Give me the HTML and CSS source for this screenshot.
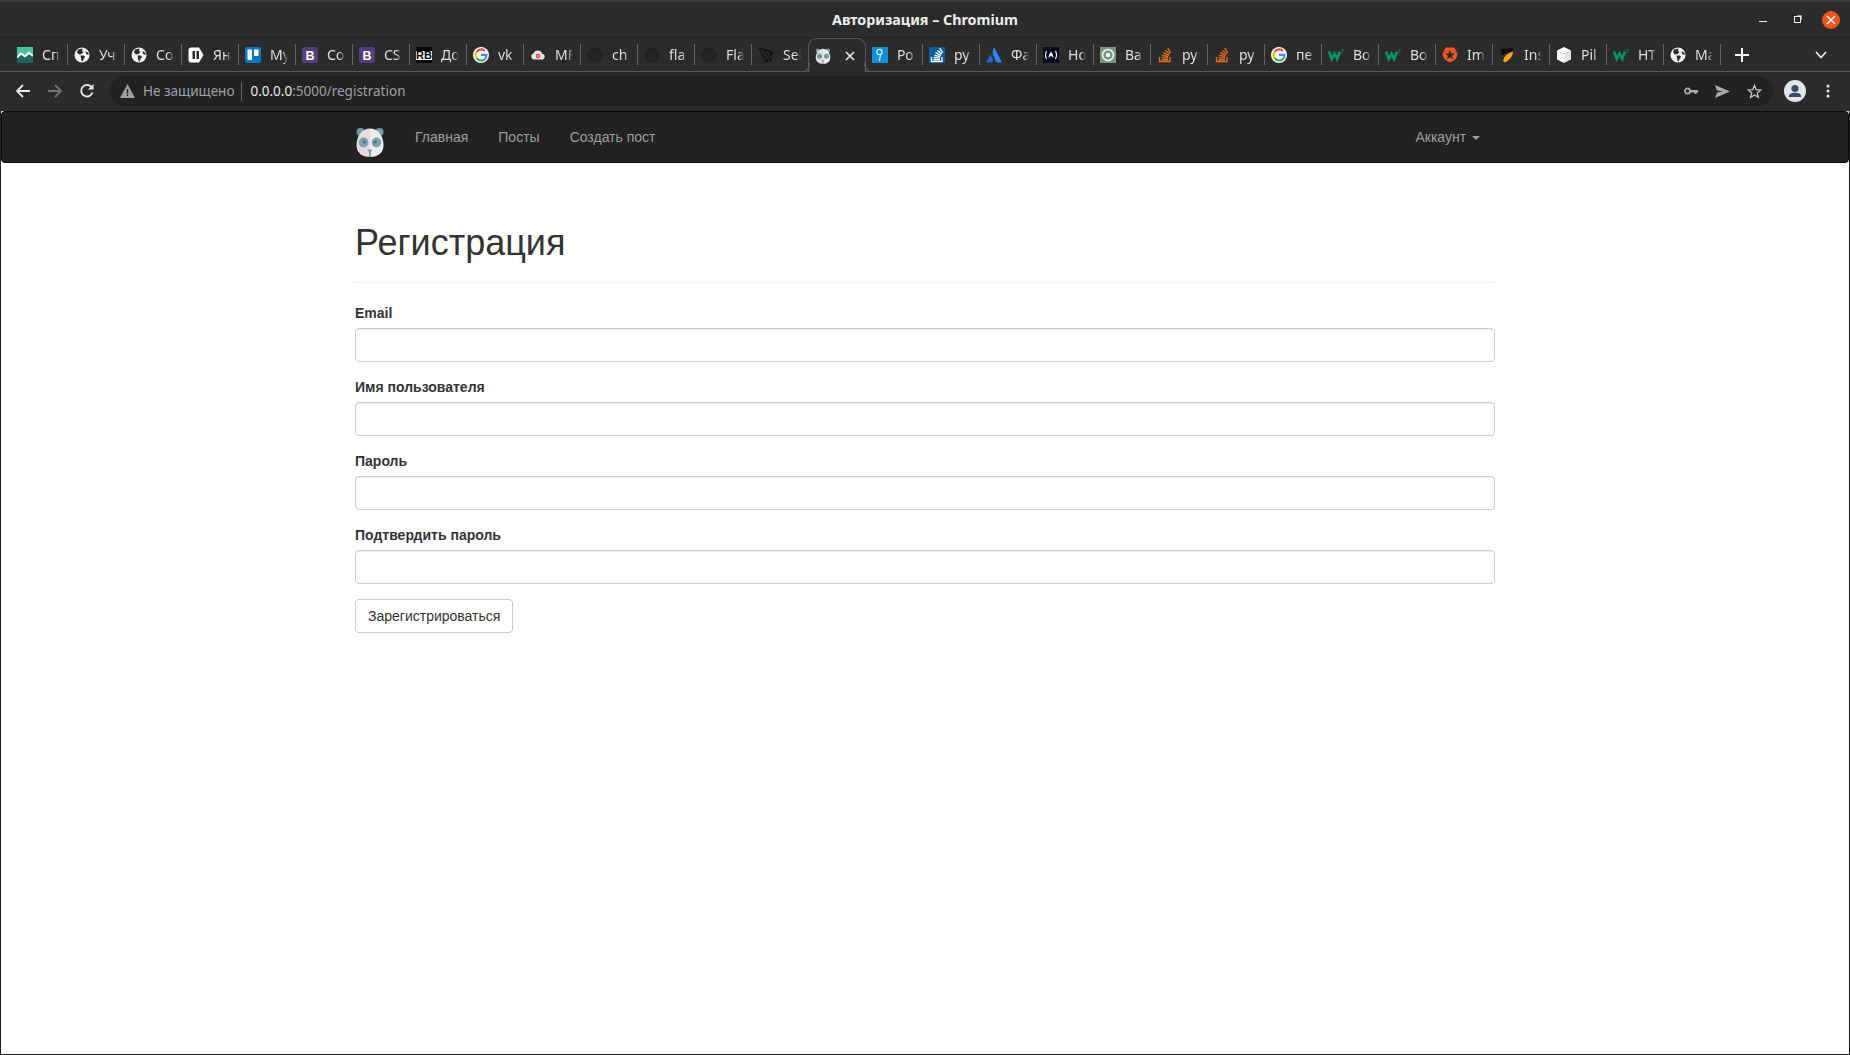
FILE: index.html
```html
<!DOCTYPE html>
<html lang="ru">

<head>
    <meta charset="UTF-8">
    <meta name="viewport" content="width=device-width, initial-scale=1.0">
    <title>Авторизация</title>
    <link rel="stylesheet" href="styles.css">
</head>

<body>
    <!-- иконки вкладок -->
    <svg class="sprite" aria-hidden="true">
        <symbol id="i-chart" viewBox="0 0 16 16">
            <rect width="16" height="8" fill="#45c4a4"/>
            <rect y="8" width="16" height="8" fill="#1b6657"/>
            <path d="M0 10.500 L4 6.500 L8 9.500 L12 5.500 L16 9" fill="none" stroke="#fff" stroke-width="2"/>
        </symbol>
        <symbol id="i-globe" viewBox="0 0 16 16">
            <circle cx="8" cy="8" r="7.500" fill="#f4f4f4"/>
            <path d="M4 2.500 L8.500 1.500 L8 4 L9.500 5 L7.500 7 L5 7.500 L3 5.500 Z" fill="#2b2b2b"/>
            <path d="M6.500 8.500 L10 8.500 L11 10 L9.500 12 L8.500 14.500 L7.500 14 L7 11 Z" fill="#2b2b2b"/>
            <path d="M11.500 4 L14.500 6 L14.500 8 L12 7 Z" fill="#2b2b2b"/>
        </symbol>
        <symbol id="i-pause" viewBox="0 0 16 16">
            <path d="M3 .5 H11 L15.500 8 L11 15.500 H3 Q.5 15.500 .5 13 V3 Q.5 .5 3 .5 Z" fill="#fff"/>
            <rect x="4.500" y="4" width="2.500" height="8" fill="#2b2b2b"/>
            <rect x="8.500" y="4" width="2.500" height="8" fill="#2b2b2b"/>
        </symbol>
        <symbol id="i-trello" viewBox="0 0 16 16">
            <rect width="16" height="16" rx="2" fill="#0b79bf"/>
            <rect x="2.500" y="2.500" width="4.500" height="10.500" rx=".7" fill="#fff"/>
            <rect x="9" y="2.500" width="4.500" height="6.500" rx=".7" fill="#fff"/>
        </symbol>
        <symbol id="i-bootstrap" viewBox="0 0 16 16">
            <rect width="16" height="16" rx="2.500" fill="#563d7c"/>
            <text x="8" y="12.500" text-anchor="middle" class="icon-text" font-size="12.500" fill="#fff">B</text>
        </symbol>
        <symbol id="i-rb" viewBox="0 0 16 16">
            <rect width="16" height="16" fill="#fff"/>
            <rect width="16" height="4" fill="#000"/>
            <rect y="13" width="16" height="3" fill="#000"/>
            <text x="8" y="12" text-anchor="middle" class="icon-text" font-size="11" fill="#000">RB</text>
        </symbol>
        <symbol id="i-google" viewBox="0 0 16 16">
            <circle cx="8" cy="8" r="8" fill="#fff"/>
            <path d="M12 4.100 A5.400 5.400 0 0 0 3.700 4.800" fill="none" stroke="#ea4335" stroke-width="2.200"/>
            <path d="M3.700 4.800 A5.400 5.400 0 0 0 3.700 11.200" fill="none" stroke="#fbbc05" stroke-width="2.200"/>
            <path d="M3.700 11.200 A5.400 5.400 0 0 0 12 11.900" fill="none" stroke="#34a853" stroke-width="2.200"/>
            <path d="M12 11.900 A5.400 5.400 0 0 0 13.400 7.800 H8" fill="none" stroke="#4285f4" stroke-width="2.200"/>
        </symbol>
        <symbol id="i-cloud" viewBox="0 0 16 16">
            <path d="M4 12.500 A3 3 0 0 1 3.500 6.600 A4.600 4.600 0 0 1 12.300 6.800 A2.900 2.900 0 0 1 12.500 12.500 Z" fill="#e6e6e6"/>
            <circle cx="8" cy="9" r="2.200" fill="#d23c3c"/>
            <rect x="7" y="8.500" width="2" height="1" fill="#fff"/>
        </symbol>
        <symbol id="i-github" viewBox="0 0 16 16">
            <circle cx="8" cy="8" r="7.500" fill="#1c2329"/>
            <path d="M5 14 V11 Q3.500 9.500 3.700 7.500 L4 4 L6 5 H10 L12 4 L12.300 7.500 Q12.500 9.500 11 11 V14 Z" fill="#252525"/>
        </symbol>
        <symbol id="i-harp" viewBox="0 0 16 16">
            <path d="M0 0 L3 1 L14 4 L15 6 L13 14 L8 15.500 L5 10 Z" fill="#121212"/>
            <path d="M3 2 L9 13 M6 3.500 L11 13 M9 4 L13 11" stroke="#3d3d3d" stroke-width=".8" fill="none"/>
        </symbol>
        <symbol id="i-panda" viewBox="0 0 30 30">
            <circle cx="5.500" cy="5" r="4" fill="#6f9bab"/>
            <circle cx="24.500" cy="5" r="4" fill="#6f9bab"/>
            <path d="M15 1.500 C7 1.500 1.500 9 1.500 18 C1.500 26 7 30 15 30 Z" fill="#e9dcdc"/>
            <path d="M15 1.500 C23 1.500 28.500 9 28.500 18 C28.500 26 23 30 15 30 Z" fill="#f3ecec"/>
            <ellipse cx="8.500" cy="15.500" rx="4.800" ry="5" fill="#7aa3b2"/>
            <ellipse cx="21.500" cy="15.500" rx="4.800" ry="5" fill="#7aa3b2"/>
            <circle cx="9.500" cy="15" r="1.600" fill="#4d7382"/>
            <circle cx="20.500" cy="15" r="1.600" fill="#4d7382"/>
            <path d="M12.500 22.500 H17.500 L16 25 V30 H14 V25 Z" fill="#7aa3b2"/>
        </symbol>
        <symbol id="i-hook" viewBox="0 0 16 16">
            <rect width="16" height="16" fill="#0d8fd8"/>
            <circle cx="7.500" cy="5" r="2.600" fill="none" stroke="#d8f3ff" stroke-width="1.200"/>
            <path d="M8.500 7.500 L7.500 14" stroke="#d8f3ff" stroke-width="1.200"/>
        </symbol>
        <symbol id="i-stack" viewBox="0 0 16 16">
            <path d="M2.500 10 V14.500 H13 V10" fill="none" stroke="currentColor" stroke-width="1.300"/>
            <path d="M4.500 12.800 H11 M4.700 10.500 L11 11.100 M5.300 8.200 L11.300 9.600 M6.500 5.700 L12 8.300 M8.300 3.500 L12.800 7 M10.700 1.200 L13.700 5.800" fill="none" stroke="currentColor" stroke-width="1.400"/>
        </symbol>
        <symbol id="i-atlassian" viewBox="0 0 16 16">
            <path d="M8.200 .5 C6 4 6.300 7 8 10 L10.500 15.500 H16 Z" fill="#2684ff"/>
            <path d="M4.500 7.500 L0 15.500 H6.500 L7 12 Z" fill="#2065d1"/>
        </symbol>
        <symbol id="i-fcc" viewBox="0 0 16 16">
            <rect width="16" height="16" fill="#0a0a23"/>
            <path d="M3.500 4 Q1.500 8 3.500 12 M12.500 4 Q14.500 8 12.500 12" fill="none" stroke="#fff" stroke-width="1.100"/>
            <path d="M5.500 11 Q5.500 8 8 4.500 Q10.500 8 10.500 11 L8 8.500 Z" fill="#fff"/>
        </symbol>
        <symbol id="i-target" viewBox="0 0 16 16">
            <rect width="16" height="16" fill="#77957c"/>
            <circle cx="8" cy="8" r="5.500" fill="none" stroke="#f0f0f0" stroke-width="1.600"/>
            <circle cx="8" cy="8" r="2.200" fill="#f0f0f0"/>
        </symbol>
        <symbol id="i-w3" viewBox="0 0 16 16">
            <path d="M1 4.500 L3.800 12 L6.500 6.500 L9.200 12 L12 4.500" fill="none" stroke="#04995f" stroke-width="2.500"/>
            <path d="M13.500 2.500 H15.500 L14.500 4 Q15.800 5 13.500 5.800" fill="none" stroke="#04995f" stroke-width=".7"/>
        </symbol>
        <symbol id="i-auth0" viewBox="0 0 16 16">
            <path d="M3.500 .5 H12.500 L15.500 7 C15.500 11 12 14 8 15.500 C4 14 .5 11 .5 7 Z" fill="#eb5424"/>
            <path d="M8 3 L9.300 6.500 H13 L10 8.700 L11 12.300 L8 10.200 L5 12.300 L6 8.700 L3 6.500 H6.700 Z" fill="#2b2b2b"/>
        </symbol>
        <symbol id="i-ins" viewBox="0 0 16 16">
            <path d="M2 2.500 Q8 .5 14.500 1 L14 4 Q8 4.500 3 8 Z" fill="#0d0d0d"/>
            <path d="M14 4.500 C14 9 11 13 6 15.500 L4 14 L5.500 10 Q8 6 14 4.500 Z" fill="#eaa624"/>
        </symbol>
        <symbol id="i-cube" viewBox="0 0 16 16">
            <path d="M8 0 L15 3.500 L8 7 L1 3.500 Z" fill="#fff"/>
            <path d="M1 3.500 L8 7 V16 L1 12.500 Z" fill="#f4f4f4"/>
            <path d="M15 3.500 L8 7 V16 L15 12.500 Z" fill="#e2e2e2"/>
        </symbol>
    </svg>

    <div class="titlebar">
        <div></div>
        <div class="window-title">Авторизация – Chromium</div>
        <div class="window-controls">
            <span class="win-min"></span>
            <span class="win-restore"></span>
            <span class="win-close">
                <svg width="10" height="10" viewBox="0 0 10 10"><path d="M1 1 L9 9 M9 1 L1 9" stroke="#fff" stroke-width="1.300"/></svg>
            </span>
        </div>
    </div>

    <div class="tabstrip">
        <div class="tab"><svg class="favicon"><use href="#i-chart"/></svg><span class="tab-label">Сп</span><i class="tab-sep"></i></div>
        <div class="tab"><svg class="favicon"><use href="#i-globe"/></svg><span class="tab-label">Уч</span><i class="tab-sep"></i></div>
        <div class="tab"><svg class="favicon"><use href="#i-globe"/></svg><span class="tab-label">Со</span><i class="tab-sep"></i></div>
        <div class="tab"><svg class="favicon"><use href="#i-pause"/></svg><span class="tab-label">Ян</span><i class="tab-sep"></i></div>
        <div class="tab"><svg class="favicon"><use href="#i-trello"/></svg><span class="tab-label">My</span><i class="tab-sep"></i></div>
        <div class="tab"><svg class="favicon"><use href="#i-bootstrap"/></svg><span class="tab-label">Со</span><i class="tab-sep"></i></div>
        <div class="tab"><svg class="favicon"><use href="#i-bootstrap"/></svg><span class="tab-label">CS</span><i class="tab-sep"></i></div>
        <div class="tab"><svg class="favicon"><use href="#i-rb"/></svg><span class="tab-label">До</span><i class="tab-sep"></i></div>
        <div class="tab"><svg class="favicon"><use href="#i-google"/></svg><span class="tab-label">vk</span><i class="tab-sep"></i></div>
        <div class="tab"><svg class="favicon"><use href="#i-cloud"/></svg><span class="tab-label">MF</span><i class="tab-sep"></i></div>
        <div class="tab"><svg class="favicon"><use href="#i-github"/></svg><span class="tab-label">ch</span><i class="tab-sep"></i></div>
        <div class="tab"><svg class="favicon"><use href="#i-github"/></svg><span class="tab-label">fla</span><i class="tab-sep"></i></div>
        <div class="tab"><svg class="favicon"><use href="#i-github"/></svg><span class="tab-label">Fla</span><i class="tab-sep"></i></div>
        <div class="tab tab-before-active"><svg class="favicon"><use href="#i-harp"/></svg><span class="tab-label">Sel</span><i class="tab-sep"></i></div>
        <div class="tab tab-active"><svg class="favicon"><use href="#i-panda"/></svg>
            <svg class="tab-close" width="10" height="10" viewBox="0 0 10 10"><path d="M1 1 L9 9 M9 1 L1 9" stroke="#e8eaed" stroke-width="1.700"/></svg>
        </div>
        <div class="tab"><svg class="favicon"><use href="#i-hook"/></svg><span class="tab-label">Ро</span><i class="tab-sep"></i></div>
        <div class="tab"><svg class="favicon icon-so-blue"><use href="#i-stack"/></svg><span class="tab-label">py</span><i class="tab-sep"></i></div>
        <div class="tab"><svg class="favicon"><use href="#i-atlassian"/></svg><span class="tab-label">Фа</span><i class="tab-sep"></i></div>
        <div class="tab"><svg class="favicon"><use href="#i-fcc"/></svg><span class="tab-label">Но</span><i class="tab-sep"></i></div>
        <div class="tab"><svg class="favicon"><use href="#i-target"/></svg><span class="tab-label">Ва</span><i class="tab-sep"></i></div>
        <div class="tab"><svg class="favicon icon-so-orange"><use href="#i-stack"/></svg><span class="tab-label">py</span><i class="tab-sep"></i></div>
        <div class="tab"><svg class="favicon icon-so-orange"><use href="#i-stack"/></svg><span class="tab-label">py</span><i class="tab-sep"></i></div>
        <div class="tab"><svg class="favicon"><use href="#i-google"/></svg><span class="tab-label">пе</span><i class="tab-sep"></i></div>
        <div class="tab"><svg class="favicon"><use href="#i-w3"/></svg><span class="tab-label">Во</span><i class="tab-sep"></i></div>
        <div class="tab"><svg class="favicon"><use href="#i-w3"/></svg><span class="tab-label">Во</span><i class="tab-sep"></i></div>
        <div class="tab"><svg class="favicon"><use href="#i-auth0"/></svg><span class="tab-label">Im</span><i class="tab-sep"></i></div>
        <div class="tab"><svg class="favicon"><use href="#i-ins"/></svg><span class="tab-label">Ins</span><i class="tab-sep"></i></div>
        <div class="tab"><svg class="favicon"><use href="#i-cube"/></svg><span class="tab-label">Pil</span><i class="tab-sep"></i></div>
        <div class="tab"><svg class="favicon"><use href="#i-w3"/></svg><span class="tab-label">HT</span><i class="tab-sep"></i></div>
        <div class="tab"><svg class="favicon"><use href="#i-globe"/></svg><span class="tab-label">Ма</span><i class="tab-sep"></i></div>
        <svg class="new-tab" width="14" height="14" viewBox="0 0 14 14"><path d="M7 0 V14 M0 7 H14" stroke="#fff" stroke-width="2"/></svg>
        <svg class="tab-search" width="12" height="8" viewBox="0 0 12 8"><path d="M1 1 L6 6.500 L11 1" fill="none" stroke="#e8eaed" stroke-width="1.600"/></svg>
    </div>

    <div class="toolbar">
        <svg class="nav-btn" width="16" height="16" viewBox="0 0 16 16"><path d="M15 8 H2 M8 2 L2 8 L8 14" fill="none" stroke="#e8eaed" stroke-width="1.800"/></svg>
        <svg class="nav-btn" width="16" height="16" viewBox="0 0 16 16"><path d="M1 8 H14 M8 2 L14 8 L8 14" fill="none" stroke="#737373" stroke-width="1.800"/></svg>
        <svg class="nav-btn" width="16" height="16" viewBox="0 0 16 16"><path d="M13.500 9.500 A5.800 5.800 0 1 1 12.200 3.700" fill="none" stroke="#e8eaed" stroke-width="1.800"/><path d="M14.500 1 V6.500 H9 Z" fill="#e8eaed"/></svg>

        <div class="omnibox">
            <svg class="warn-icon" width="15" height="14" viewBox="0 0 15 14"><path d="M7.500 0 L15 14 H0 Z" fill="#9aa0a6"/><rect x="6.800" y="5" width="1.400" height="4.500" fill="#222"/><rect x="6.800" y="10.500" width="1.400" height="1.500" fill="#222"/></svg>
            <span class="not-secure">Не защищено</span>
            <span class="omni-sep"></span>
            <span class="url"><b>0.0.0.0</b>:5000/registration</span>
            <div class="omni-actions">
                <svg width="14" height="8" viewBox="0 0 14 8"><circle cx="3.500" cy="4" r="2.600" fill="none" stroke="#aaa" stroke-width="1.800"/><path d="M6 3 H14 V5.500 H12.500 V7 H10.500 V5.500 H6 Z" fill="#aaa"/></svg>
                <svg width="15" height="13" viewBox="0 0 15 13"><path d="M0 0 L15 6.500 L0 13 L2 7.500 L8 6.500 L2 5.500 Z" fill="#aaa"/></svg>
                <svg width="15" height="15" viewBox="0 0 15 15"><path d="M7.500 1.500 L9.200 5.700 L13.800 6 L10.200 8.900 L11.400 13.300 L7.500 10.900 L3.600 13.300 L4.800 8.900 L1.200 6 L5.800 5.700 Z" fill="none" stroke="#c4c7ca" stroke-width="1.300"/></svg>
            </div>
        </div>

        <svg class="avatar" width="22" height="22" viewBox="0 0 22 22"><circle cx="11" cy="11" r="11" fill="#e3e6ea"/><circle cx="11" cy="8.500" r="3.600" fill="#3f4d63"/><path d="M4.500 17 Q5 12.800 11 12.800 Q17 12.800 17.500 17 Z" fill="#3f4d63"/></svg>
        <svg class="menu-dots" width="4" height="14" viewBox="0 0 4 14"><circle cx="2" cy="2" r="1.500" fill="#e8eaed"/><circle cx="2" cy="7" r="1.500" fill="#e8eaed"/><circle cx="2" cy="12" r="1.500" fill="#e8eaed"/></svg>
    </div>

    <div class="page">
        <nav class="navbar">
            <div class="nav-container">
                <a class="navbar-brand" href="#"><svg width="30" height="30"><use href="#i-panda"/></svg></a>
                <ul class="nav-list">
                    <li><a href="#">Главная</a></li>
                    <li><a href="#">Посты</a></li>
                    <li><a href="#">Создать пост</a></li>
                </ul>
                <ul class="nav-list nav-right">
                    <li><a href="#">Аккаунт <span class="caret"></span></a></li>
                </ul>
            </div>
        </nav>

        <main class="container">
            <div class="page-header">
                <h1>Регистрация</h1>
            </div>
            <form>
                <div class="form-group">
                    <label for="email">Email</label>
                    <input type="text" id="email">
                </div>
                <div class="form-group">
                    <label for="username">Имя пользователя</label>
                    <input type="text" id="username">
                </div>
                <div class="form-group">
                    <label for="password">Пароль</label>
                    <input type="password" id="password">
                </div>
                <div class="form-group">
                    <label for="confirm">Подтвердить пароль</label>
                    <input type="password" id="confirm">
                </div>
                <button type="button" class="btn">Зарегистрироваться</button>
            </form>
        </main>
    </div>
</body>

</html>
```

FILE: styles.css
```css
* {
    box-sizing: border-box;
}

body {
    margin: 0;
    height: 100vh;
    overflow: hidden;
    display: flex;
    flex-direction: column;
    background-color: #fff;
    color: #333;
    font-family: "Liberation Sans", Arial, sans-serif;
    font-size: 14px;
    line-height: 20px;
}

.sprite {
    display: none;
}

.icon-text {
    font-family: "Liberation Sans", Arial, sans-serif;
    font-weight: bold;
}

/* окно браузера */
.titlebar {
    height: 38px;
    flex-shrink: 0;
    display: grid;
    grid-template-columns: 1fr auto 1fr;
    align-items: center;
    background-color: #2b2b2b;
    border-top: 2px solid #3b3b3b;
    border-bottom: 1px solid #212121;
}

.window-title {
    color: #eeeeee;
    font-family: "Noto Sans", sans-serif;
    font-size: 14.300px;
    font-weight: bold;
}

.window-controls {
    display: flex;
    justify-content: flex-end;
    align-items: center;
    padding-right: 10px;
}

.win-min {
    width: 8px;
    height: 1px;
    margin-top: 4px;
    background-color: #f0f0f0;
}

.win-restore {
    width: 7px;
    height: 7px;
    margin-left: 27px;
    margin-bottom: 1px;
    border: 1px solid #f0f0f0;
    box-shadow: 2px -2px 0 -1px #999;
}

.win-close {
    width: 18px;
    height: 18px;
    margin-left: 21px;
    display: flex;
    align-items: center;
    justify-content: center;
    border-radius: 50%;
    background-color: #e95420;
}

.tabstrip {
    height: 34px;
    flex-shrink: 0;
    display: flex;
    padding-left: 11px;
    background-color: #2b2b2b;
    border-bottom: 1px solid #5a5a5a;
}

.tab {
    width: 57px;
    height: 33px;
    flex-shrink: 0;
    display: flex;
    align-items: center;
    padding-left: 6px;
}

.favicon {
    width: 16px;
    height: 16px;
    flex-shrink: 0;
    margin-top: 1px;
}

.icon-so-blue {
    color: #fff;
    background-color: #0a5d9e;
}

.icon-so-orange {
    color: #e0701f;
}

.tab-label {
    width: 18px;
    margin-left: 9px;
    overflow: hidden;
    white-space: nowrap;
    color: #dedede;
    font-family: "Noto Sans", sans-serif;
    font-size: 14px;
    -webkit-mask-image: linear-gradient(to right, #000 70%, transparent);
    mask-image: linear-gradient(to right, #000 70%, transparent);
}

.tab-sep {
    width: 1px;
    height: 21px;
    margin-left: auto;
    background-color: #666;
}

.tab-before-active .tab-sep {
    visibility: hidden;
}

.tab-active {
    position: relative;
    height: 34px;
    background-color: #2b2b2b;
    border: 1px solid #5a5a5a;
    border-bottom: none;
    border-radius: 9px 9px 0 0;
    padding-left: 6px;
    margin-left: -1px;
    width: 58px;
}

/* скругления внизу активной вкладки */
.tab-active::before,
.tab-active::after {
    content: "";
    position: absolute;
    bottom: 0;
    width: 8px;
    height: 8px;
    border-bottom: 1px solid #5a5a5a;
}

.tab-active::before {
    left: -8px;
    border-right: 1px solid #5a5a5a;
    border-bottom-right-radius: 8px;
}

.tab-active::after {
    right: -8px;
    border-left: 1px solid #5a5a5a;
    border-bottom-left-radius: 8px;
}

.tab-close {
    margin-left: 14px;
}

.new-tab {
    align-self: center;
    margin-left: 14px;
    flex-shrink: 0;
}

.tab-search {
    align-self: center;
    margin-left: auto;
    margin-right: 23px;
}

.toolbar {
    height: 39px;
    flex-shrink: 0;
    display: flex;
    align-items: center;
    padding-left: 15px;
    padding-bottom: 1px;
    background-color: #2b2b2b;
}

.nav-btn {
    margin-right: 16px;
}

.omnibox {
    width: 1663px;
    height: 30px;
    margin-left: -1px;
    display: flex;
    align-items: center;
    padding-left: 10px;
    border-radius: 15px;
    background-color: #222;
    font-family: "Noto Sans", sans-serif;
    font-size: 13.500px;
}

.not-secure {
    margin-left: 8px;
    color: #9aa0a6;
}

.omni-sep {
    width: 1px;
    height: 19px;
    margin: 0 8px 0 7px;
    background-color: #666;
}

.url {
    color: #9aa0a6;
}

.url b {
    font-weight: normal;
    color: #e8eaed;
}

.omni-actions {
    margin-left: auto;
    margin-right: 11px;
    display: flex;
    align-items: center;
    gap: 17px;
}

.avatar {
    margin-left: 11px;
}

.menu-dots {
    margin-left: 20px;
}

/* страница */
.page {
    flex: 1;
    min-height: 0;
    border: 1px solid #222;
    border-top: none;
}

.navbar {
    min-height: 52px;
    background-color: #222;
    border: 1px solid #080808;
    border-radius: 4px;
    margin-bottom: 20px;
}

.nav-container {
    width: 1170px;
    margin: 0 auto;
    padding: 0 15px;
    display: flex;
}

.navbar-brand {
    width: 45px;
    height: 50px;
    padding-top: 15px;
    display: block;
}

.nav-list {
    display: flex;
    margin: 0;
    padding: 0;
    list-style: none;
}

.nav-right {
    margin-left: auto;
}

.nav-list a {
    display: block;
    padding: 15px;
    color: #9d9d9d;
    text-decoration: none;
}

.caret {
    display: inline-block;
    width: 0;
    height: 0;
    margin-left: 2px;
    vertical-align: middle;
    border-top: 4px solid #9d9d9d;
    border-right: 4px solid transparent;
    border-left: 4px solid transparent;
}

.container {
    width: 1170px;
    margin: 0 auto;
    padding: 40px 15px 0;
}

.page-header {
    padding-bottom: 9px;
    margin-bottom: 20px;
    border-bottom: 1px solid #eee;
}

h1 {
    margin: 0 0 10px;
    font-size: 36px;
    font-weight: 500;
    line-height: 1.1;
}

.form-group {
    margin-bottom: 15px;
}

.form-group label {
    display: block;
    margin-bottom: 5px;
    font-weight: bold;
}

.form-group input {
    display: block;
    width: 100%;
    height: 34px;
    padding: 6px 12px;
    border: 1px solid #ccc;
    border-radius: 4px;
    box-shadow: inset 0 1px 1px rgba(0, 0, 0, 0.075);
    font: inherit;
    color: #555;
}

.btn {
    height: 34px;
    padding: 6px 12px;
    border: 1px solid #ccc;
    border-radius: 4px;
    background-color: #fff;
    color: #333;
    font: inherit;
}
```
